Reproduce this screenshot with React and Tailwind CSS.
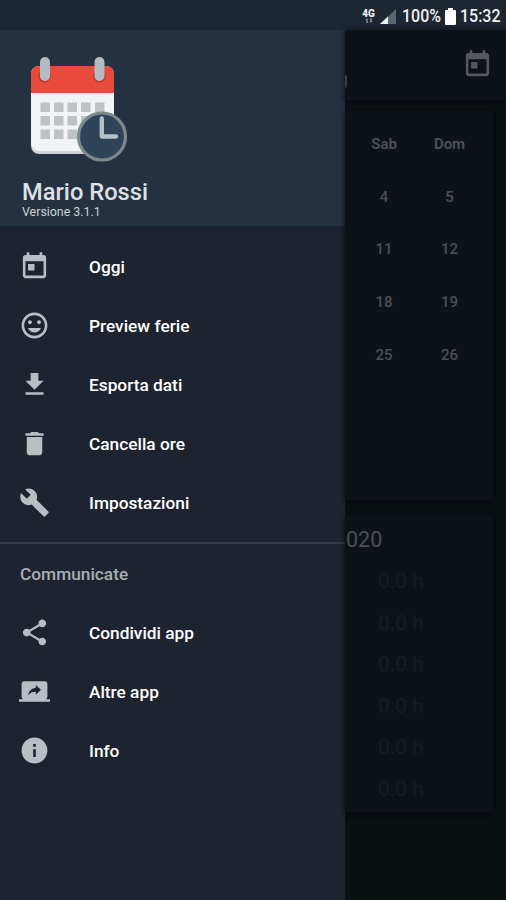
import React from "react";

const icons = {
  today: "M19 3h-1V1h-2v2H8V1H6v2H5c-1.11 0-1.99.9-1.99 2L3 19c0 1.1.89 2 2 2h14c1.1 0 2-.9 2-2V5c0-1.1-.9-2-2-2zm0 16H5V8h14v11zM7 10h5v5H7z",
  mood: "M11.99 2C6.47 2 2 6.48 2 12s4.47 10 9.99 10C17.52 22 22 17.52 22 12S17.52 2 11.99 2zM12 20c-4.42 0-8-3.58-8-8s3.58-8 8-8 8 3.58 8 8-3.58 8-8 8zm3.5-9c.83 0 1.5-.67 1.5-1.5S16.33 8 15.5 8 14 8.67 14 9.5s.67 1.5 1.5 1.5zm-7 0c.83 0 1.5-.67 1.5-1.5S9.33 8 8.5 8 7 8.67 7 9.5 7.67 11 8.5 11zm3.5 6.5c2.33 0 4.31-1.46 5.11-3.5H6.89c.8 2.04 2.78 3.5 5.11 3.5z",
  download: "M19 9h-4V3H9v6H5l7 7 7-7zM5 18v2h14v-2H5z",
  trash: "M6 19c0 1.1.9 2 2 2h8c1.1 0 2-.9 2-2V7H6v12zM19 4h-3.5l-1-1h-5l-1 1H5v2h14V4z",
  wrench: "M22.7 19l-9.1-9.1c.9-2.3.4-5-1.5-6.9-2-2-5-2.4-7.4-1.3L9 6 6 9 1.6 4.7C.4 7.1.9 10.1 2.9 12.1c1.9 1.9 4.6 2.4 6.9 1.5l9.1 9.1c.4.4 1 .4 1.4 0l2.3-2.3c.5-.4.5-1.1.1-1.4z",
  share: "M18 16.08c-.76 0-1.44.3-1.96.77L8.91 12.7c.05-.23.09-.46.09-.7s-.04-.47-.09-.7l7.05-4.11c.54.5 1.25.81 2.04.81 1.66 0 3-1.34 3-3s-1.34-3-3-3-3 1.34-3 3c0 .24.04.47.09.7L8.04 9.81C7.5 9.31 6.79 9 6 9c-1.66 0-3 1.34-3 3s1.34 3 3 3c.79 0 1.5-.31 2.04-.81l7.12 4.16c-.05.21-.08.43-.08.65 0 1.61 1.31 2.92 2.92 2.92s2.92-1.31 2.92-2.92-1.31-2.92-2.92-2.92z",
  screen: "M20 18c1.1 0 1.99-.9 1.99-2L22 6c0-1.11-.9-2-2-2H4c-1.11 0-2 .89-2 2v10c0 1.1.89 2 2 2H0v2h24v-2h-4zm-7-3.53v-2.19c-2.78 0-4.61.85-6 2.72.56-2.67 2.11-5.33 6-5.87V7l4 3.73-4 3.74z",
  info: "M12 2C6.48 2 2 6.48 2 12s4.48 10 10 10 10-4.48 10-10S17.52 2 12 2zm1 15h-2v-6h2v6zm0-8h-2V7h2v2z",
};

function Icon({ name, className }) {
  return (
    <svg viewBox="0 0 24 24" fill="currentColor" className={className}>
      <path d={icons[name]} />
    </svg>
  );
}

function StatusBar() {
  return (
    <div className="flex h-[30px] shrink-0 items-center justify-end bg-[#1d2631] pr-[5px] pt-[2px] text-[19px] leading-[28px] text-[#eef0f2]">
      <div className="mr-[5px] flex w-[13px] flex-col items-center">
        <span className="text-[10px] font-black leading-[9px]">4G</span>
        <svg viewBox="0 0 8 5" className="h-[5px] w-[8px]" fill="#6d747c">
          <path d="M2 0L4 2H3v3H1V2H0zM6 5L4 3h1V0h2v3h1z" />
        </svg>
      </div>
      <svg viewBox="0 0 16 15" className="mr-[6px] h-[15px] w-[16px]">
        <path d="M0 15L16 0V15z" fill="#5b6671" />
        <path d="M0 15L8 7.5V15z" fill="#f1f3f4" />
      </svg>
      <span className="w-[39px] origin-left scale-x-[0.84] whitespace-nowrap font-medium">100%</span>
      <svg viewBox="0 0 11 17" className="mx-[4px] h-[17px] w-[11px]" fill="#fff">
        <path d="M3 0h5v2h2a1 1 0 011 1v13a1 1 0 01-1 1H1a1 1 0 01-1-1V3a1 1 0 011-1h2z" />
      </svg>
      <span className="w-[41px] origin-left scale-x-[0.84] whitespace-nowrap font-medium">15:32</span>
    </div>
  );
}

function Logo() {
  return (
    <svg viewBox="0 0 100 110" className="h-[110px] w-[100px]">
      <rect x="1" y="12" width="83" height="88" rx="8" fill="#cbd3d8" />
      <path d="M1 36h83v53a8 8 0 01-8 8H9a8 8 0 01-8-8z" fill="#f1f4f6" />
      <path d="M1 39V20a8 8 0 018-8h67a8 8 0 018 8v19z" fill="#e84b3c" />
      <circle cx="14.500" cy="22" r="6.500" fill="#c23a2e" />
      <circle cx="69.500" cy="22" r="6.500" fill="#c23a2e" />
      <rect x="10" y="3" width="10" height="24" rx="5" fill="#b3bcc3" />
      <rect x="64.500" y="3" width="10" height="24" rx="5" fill="#b3bcc3" />
      <g fill="#bec2c5">
        {[48.5, 62, 75.5].map((y) =>
          [10.5, 24, 37.5, 51, 65].map((x) => (
            <rect key={`${x}-${y}`} x={x} y={y} width="9.5" height="9.500" />
          ))
        )}
      </g>
      <circle cx="72" cy="82.500" r="23.500" fill="#2f4359" stroke="#7c8a8c" strokeWidth="3.200" />
      <path d="M71.800 64.500v18H86" fill="none" stroke="#b6c0c8" strokeWidth="4.300" strokeLinecap="round" strokeLinejoin="round" />
    </svg>
  );
}

function MenuItem({ icon, label }) {
  return (
    <li className="flex h-[59px] items-center pl-[19px]">
      <Icon name={icon} className="h-[31px] w-[31px] text-[#b9bdc4]" />
      <span className="ml-[39px] text-[17.3px] font-medium leading-[22px] text-white">{label}</span>
    </li>
  );
}

function Drawer() {
  return (
    <aside className="flex w-[345px] shrink-0 flex-col bg-[#1d242f]">
      <header className="flex h-[196px] flex-col bg-[#233141] pl-[22px] pt-[24px]">
        <div className="ml-[8px]">
          <Logo />
        </div>
        <h1 className="mt-[15px] text-[23.7px] font-medium leading-[26px] text-[#dfe1e4]">Mario Rossi</h1>
        <p className="mt-px text-[12.4px] leading-[12px] text-[#cfd2d6]">Versione 3.1.1</p>
      </header>
      <ul className="mt-[11px]">
        <MenuItem icon="today" label="Oggi" />
        <MenuItem icon="mood" label="Preview ferie" />
        <MenuItem icon="download" label="Esporta dati" />
        <MenuItem icon="trash" label="Cancella ore" />
        <MenuItem icon="wrench" label="Impostazioni" />
      </ul>
      <div className="mt-[10px] h-[2px] bg-[#353c46]" />
      <h2 className="mt-[19px] pl-[20px] text-[17.3px] font-medium leading-[22px] text-[#a9adb3]">Communicate</h2>
      <ul className="mt-[18px]">
        <MenuItem icon="share" label="Condividi app" />
        <MenuItem icon="screen" label="Altre app" />
        <MenuItem icon="info" label="Info" />
      </ul>
    </aside>
  );
}

const weekend = ["Sab", "Dom", "4", "5", "11", "12", "18", "19", "25", "26"];

function Calendar() {
  return (
    <main className="flex min-w-0 flex-1 flex-col bg-[#0b1013]">
      <div className="flex h-[70px] items-start justify-between bg-[#0d1218] pr-[13px] shadow-[0_1px_6px_#070a0c]">
        <div className="mt-[45px] h-[13px] w-[2px] rounded-r bg-[#3a3f44]" />
        <Icon name="today" className="mt-[19px] h-[31px] w-[31px] text-[#56585b]" />
      </div>
      <section className="mr-[13px] mt-[11px] h-[389px] rounded-br-[3px] bg-[#0d1218] pr-[11px] pt-[7px] shadow-[0_2px_5px_#06090b]">
        <div className="grid grid-cols-[66px_65px] pl-[6px] text-center text-[15px] font-medium text-[#4b4f53]">
          {weekend.map((d, i) => (
            <span key={d} className={i < 2 ? "h-[52.7px] font-bold leading-[53px]" : "h-[52.7px] leading-[53px]"}>
              {d}
            </span>
          ))}
        </div>
      </section>
      <section className="mr-[13px] mt-[15px] h-[297px] rounded-br-[3px] bg-[#0d1218] pt-[11px] shadow-[0_2px_5px_#06090b]">
        <h3 className="pl-px text-[21.5px] leading-[28px] text-[#4b4f53]">020</h3>
        <ul className="mt-[7px] pl-[33px] text-[21px] text-[#171c20]">
          {[0, 1, 2, 3, 4, 5].map((n) => (
            <li key={n} className="h-[41.5px] leading-[41px]">0.0 h</li>
          ))}
        </ul>
      </section>
    </main>
  );
}

export default function App() {
  return (
    <div className="flex h-[900px] w-[506px] flex-col overflow-hidden bg-[#0b1013] font-[Roboto,'Liberation_Sans',sans-serif]">
      <StatusBar />
      <div className="flex min-h-0 flex-1">
        <Drawer />
        <Calendar />
      </div>
    </div>
  );
}
